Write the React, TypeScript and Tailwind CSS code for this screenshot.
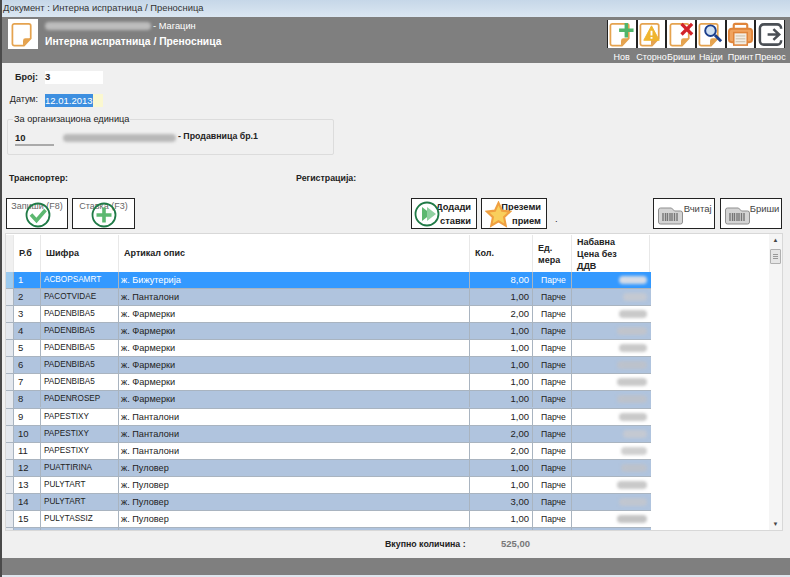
import type { ReactNode } from "react";

type Row = { code: string; name: string; qty: string; blob: string };

const rows: Row[] = [
  { code: "ACBOPSAMRT", name: "ж. Бижутерија", qty: "8,00", blob: "w-[28px] bg-[#d5dbe6]" },
  { code: "PACOTVIDAE", name: "ж. Панталони", qty: "1,00", blob: "w-[24px] bg-[#c4c9d2]" },
  { code: "PADENBIBA5", name: "ж. Фармерки", qty: "2,00", blob: "w-[28px] bg-[#c9c9c9]" },
  { code: "PADENBIBA5", name: "ж. Фармерки", qty: "1,00", blob: "w-[30px] bg-[#c0c4cc]" },
  { code: "PADENBIBA5", name: "ж. Фармерки", qty: "1,00", blob: "w-[28px] bg-[#c9c9c9]" },
  { code: "PADENBIBA5", name: "ж. Фармерки", qty: "1,00", blob: "w-[30px] bg-[#bcc2cc]" },
  { code: "PADENBIBA5", name: "ж. Фармерки", qty: "1,00", blob: "w-[30px] bg-[#c9c9c9]" },
  { code: "PADENROSEP", name: "ж. Фармерки", qty: "1,00", blob: "w-[30px] bg-[#bcc2cc]" },
  { code: "PAPESTIXY", name: "ж. Панталони", qty: "1,00", blob: "w-[28px] bg-[#c9c9c9]" },
  { code: "PAPESTIXY", name: "ж. Панталони", qty: "2,00", blob: "w-[24px] bg-[#c4c9d2]" },
  { code: "PAPESTIXY", name: "ж. Панталони", qty: "2,00", blob: "w-[26px] bg-[#d0d0d0]" },
  { code: "PUATTIRINA", name: "ж. Пуловер", qty: "1,00", blob: "w-[26px] bg-[#bcc2cc]" },
  { code: "PULYTART", name: "ж. Пуловер", qty: "1,00", blob: "w-[30px] bg-[#c9c9c9]" },
  { code: "PULYTART", name: "ж. Пуловер", qty: "3,00", blob: "w-[28px] bg-[#c0c6d0]" },
  { code: "PULYTASSIZ", name: "ж. Пуловер", qty: "1,00", blob: "w-[30px] bg-[#c4c4c4]" },
  { code: "", name: "", qty: "", blob: "w-0" },
];

function Page({ children }: { children?: ReactNode }) {
  return (
    <svg viewBox="0 0 28 28" className="h-[27px] w-[27px]" fill="none">
      <path d="M4.500 3h15a2 2 0 0 1 2 2v13l-7 7.500H4.500a2 2 0 0 1-2-2V5a2 2 0 0 1 2-2z" fill="#fff" stroke="#e5a34f" strokeWidth="1.800" />
      <path d="M13.500 25.500v-5a2.500 2.500 0 0 1 2.500-2.500h5.500z" fill="#e5a34f" />
      {children}
    </svg>
  );
}

function ToolButton({ label, children }: { label: string; children: ReactNode }) {
  return (
    <div className="flex w-[29.7px] flex-col items-center">
      <div className="flex h-[28px] w-[29.7px] items-center justify-center border-x border-[#222] bg-white">{children}</div>
      <span className="mt-[3px] whitespace-nowrap text-[9px] leading-[12px] text-white">{label}</span>
    </div>
  );
}

function GreenDisc({ plus }: { plus?: boolean }) {
  return (
    <svg viewBox="0 0 26 26" className="h-[26px] w-[26px]" fill="none">
      <circle cx="13" cy="13" r="11.500" stroke="#1f7a46" strokeWidth="1.800" />
      {plus ? (
        <path d="M13 5.500v15M5.500 13h15" stroke="#5cb870" strokeWidth="3.600" />
      ) : (
        <path d="M6 12.500l5.500 6L20.500 8" stroke="#5cb870" strokeWidth="3.600" />
      )}
    </svg>
  );
}

function Barcode() {
  return (
    <svg viewBox="0 0 26 20" className="h-[20px] w-[26px] shrink-0">
      <path d="M1.500 4a2 2 0 0 1 2-2h11l3 3h6a2 2 0 0 1 2 2v9a2 2 0 0 1-2 2h-20a2 2 0 0 1-2-2z" fill="#d4d4d4" stroke="#8f8f8f" />
      <path d="M6 7v8M8.500 7v8M10.500 7v8M13 7v8M15 7v8M17.500 7v8M20 7v8" stroke="#777" strokeWidth="1.400" />
    </svg>
  );
}

function Blob({ className }: { className: string }) {
  return <span className={`inline-block h-[8px] rounded-full blur-[1.5px] ${className}`} />;
}

function HeadCell({ className, children }: { className: string; children: ReactNode }) {
  return <div className={`flex items-center border-r border-[#e8e8e8] text-[9px] font-bold text-[#222] ${className}`}>{children}</div>;
}

export default function App() {
  return (
    <div className="flex h-[577px] w-[790px] flex-col overflow-hidden border-l-2 border-[#4a4a4a] bg-[#f0f0f0] font-['Liberation_Sans',sans-serif] text-[9.5px] text-[#222]">
      <div className="flex h-[17px] shrink-0 items-center bg-gradient-to-b from-[#c6d7e8] to-[#dbe7f2] pl-[1px] text-[9.4px] text-[#333]">
        Документ : Интерна испратница / Преносница
      </div>

      <div className="flex h-[46px] shrink-0 justify-between bg-[#7f7f7f] pl-[6px] pr-[5px] pt-[2px]">
        <div className="flex gap-[7px]">
          <div className="flex h-[30px] w-[30px] items-center justify-center bg-white">
            <Page />
          </div>
          <div className="text-white">
            <div className="flex items-center gap-[2px] leading-[14px]">
              <Blob className="w-[106px] bg-[#bdbdbd]" />
              <span className="text-[9.3px]">- Магацин</span>
            </div>
            <div className="mt-[1px] text-[10.3px] font-bold leading-[15px]">Интерна испратница / Преносница</div>
          </div>
        </div>
        <div className="flex gap-0 pt-[1px]">
          <ToolButton label="Нов">
            <Page>
              <path d="M19 2v15M11.500 9.500h15" stroke="#4fb56a" strokeWidth="3.600" />
            </Page>
          </ToolButton>
          <ToolButton label="Сторно">
            <Page>
              <path d="M14 5l8 15H6z" fill="#efb52f" stroke="#efb52f" strokeLinejoin="round" />
              <path d="M14 10v5M14 16.500v2" stroke="#fff" strokeWidth="2" />
            </Page>
          </ToolButton>
          <ToolButton label="Бриши">
            <Page>
              <path d="M14 3l11 11M25 3L14 14" stroke="#d2232a" strokeWidth="3.400" />
            </Page>
          </ToolButton>
          <ToolButton label="Најди">
            <Page>
              <circle cx="14" cy="10" r="5.500" fill="#cfe0f2" stroke="#1c3f8c" strokeWidth="2" />
              <path d="M18.500 14.500L25 21" stroke="#1c3f8c" strokeWidth="3" />
            </Page>
          </ToolButton>
          <ToolButton label="Принт">
            <svg viewBox="0 0 28 28" className="h-[27px] w-[27px]" fill="none">
              <path d="M7 9V4.500A1.500 1.500 0 0 1 8.500 3h11A1.500 1.500 0 0 1 21 4.500V9" stroke="#e0853a" strokeWidth="2.200" />
              <rect x="2" y="8" width="24" height="14" rx="3" fill="#f0a35e" stroke="#e0853a" strokeWidth="2" />
              <rect x="7" y="12" width="14" height="13" fill="#f3ede4" stroke="#e0853a" strokeWidth="1.600" />
              <path d="M9 15.500h10M9 18.500h10M9 21.500h10" stroke="#c9b9a4" />
            </svg>
          </ToolButton>
          <ToolButton label="Пренос">
            <svg viewBox="0 0 28 28" className="h-[27px] w-[27px]" fill="none">
              <path d="M11 14h11M17 8.500l6 5.500-6 5.500" stroke="#4a4f55" strokeWidth="2.600" />
              <path d="M25 8V7.500a4 4 0 0 0-4-4H7a4 4 0 0 0-4 4v13a4 4 0 0 0 4 4h14a4 4 0 0 0 4-4V20" stroke="#4a4f55" strokeWidth="2.600" />
            </svg>
          </ToolButton>
        </div>
      </div>

      <div className="mt-[8px] flex h-[13px] shrink-0 items-center">
        <span className="w-[36px] text-right text-[9px] font-bold">Број:</span>
        <div className="ml-[7px] flex h-[13px] w-[58px] items-center bg-white font-bold">3</div>
      </div>

      <div className="mt-[9px] flex h-[14px] shrink-0 items-center">
        <span className="w-[36px] text-right text-[9px]">Датум:</span>
        <div className="ml-[7px] flex h-[13px] w-[58px] bg-[#fbf8d0]">
          <span className="bg-[#3d8fe0] leading-[13px] text-white">12.01.2013</span>
        </div>
      </div>

      <div className="relative ml-[5px] mt-[12px] flex h-[36px] w-[327px] shrink-0 items-center rounded-[2px] border border-[#dcdcdc] pl-[7px]">
        <span className="absolute -top-[7px] left-[5px] bg-[#f0f0f0] px-[1px] text-[9.2px] leading-[12px]">За организациона единица</span>
        <div className="mt-[3px] w-[39px] border-b-2 border-[#aaa] font-bold leading-[13px]">10</div>
        <Blob className="ml-[9px] mt-[1px] w-[113px] bg-[#b8b8b8]" />
        <span className="ml-[2px] text-[8.8px] font-bold">- Продавница бр.1</span>
      </div>

      <div className="mt-[17px] flex h-[14px] shrink-0 items-center text-[8.8px] font-bold">
        <span className="ml-[7px] w-[287px]">Транспортер:</span>
        <span>Регистрација:</span>
      </div>

      <div className="mt-[12px] flex h-[31px] shrink-0 pl-[4px]">
        <button className="relative h-[31px] w-[62px] border border-[#222] bg-white pb-[13px] text-[9px] text-[#666]">
          Запиши (F8)
          <span className="absolute left-[18px] top-[3px]">
            <GreenDisc />
          </span>
        </button>
        <button className="relative ml-[4px] h-[31px] w-[63px] border border-[#222] bg-white pb-[13px] text-[9px] text-[#666]">
          Ставка (F3)
          <span className="absolute left-[18px] top-[3px]">
            <GreenDisc plus />
          </span>
        </button>
        <button className="relative ml-[276px] h-[31px] w-[66px] border border-[#222] bg-white pr-[5px] text-right text-[9.3px] font-bold leading-[14px] text-[#222]">
          Додади<br />ставки
          <svg viewBox="0 0 26 26" className="absolute left-[2px] top-[2px] h-[26px] w-[26px]" fill="none">
            <circle cx="13" cy="13" r="11.500" fill="#fff" stroke="#1f7a46" strokeWidth="1.800" />
            <path d="M8 6l9 7-9 7z" fill="#5cb870" />
            <path d="M13 6l9 7-9 7z" fill="#8fd0a0" />
          </svg>
        </button>
        <button className="relative ml-[4px] h-[31px] w-[66px] border border-[#222] bg-white pr-[5px] text-right text-[9.3px] font-bold leading-[14px] text-[#222]">
          Преземи<br />прием
          <svg viewBox="0 0 28 28" className="absolute left-[3px] top-[2px] h-[27px] w-[27px]">
            <path d="M14 2l3.700 8 8.300 1-6.200 5.700 1.700 8.800L14 21l-7.500 4.500 1.700-8.800L2 11l8.300-1z" fill="#f9cf5c" stroke="#f0a040" strokeWidth="2.200" />
          </svg>
        </button>
        <span className="ml-[8px] mt-[17px] leading-[8px]">.</span>
        <button className="ml-[95px] flex h-[31px] w-[62px] items-start gap-[1px] border border-[#222] bg-white pl-[3px] pt-[4px] text-[9.5px] leading-[11px] text-[#444]">
          <span className="mt-[3px]"><Barcode /></span>
          <span>Вчитај</span>
        </button>
        <button className="ml-[5px] flex h-[31px] w-[62px] items-start gap-[0px] border border-[#222] bg-white pl-[3px] pt-[4px] text-[9.5px] leading-[11px] text-[#444]">
          <span className="mt-[3px]"><Barcode /></span>
          <span>Бриши</span>
        </button>
      </div>

      <div className="ml-[3px] mt-[4px] flex h-[298px] w-[778px] shrink-0 border border-[#d8d8d8] bg-white">
        <div className="w-[763px] overflow-hidden">
          <div className="flex h-[38px] w-[645px] pt-[1px]">
            <div className="w-[8px] border-r border-[#e8e8e8] bg-[#f0f0f0]" />
            <HeadCell className="w-[27px] pl-[5px]">Р.б</HeadCell>
            <HeadCell className="w-[78px] pl-[5px]">Шифра</HeadCell>
            <HeadCell className="w-[351px] pl-[5px]">Артикал опис</HeadCell>
            <HeadCell className="w-[63px] pl-[5px]">Кол.</HeadCell>
            <HeadCell className="w-[39px] pl-[5px] leading-[12px]">Ед.<br />мера</HeadCell>
            <HeadCell className="w-[78px] pl-[5px] leading-[12px]">Набавна<br />Цена без<br />ДДВ</HeadCell>
          </div>
          {rows.map((row, i) => {
            const selected = i === 0;
            const tint = selected ? "bg-[#3399ff] text-white" : i % 2 === 1 ? "bg-[#b0c4de]" : "bg-white";
            const filler = row.code === "";
            return (
              <div key={i} className="flex h-[17.07px] w-[645px] border-b border-[#a9b4c0]">
                <div className={`w-[8px] border-r border-[#a9b4c0] ${selected ? "bg-[#9ccbf0]" : "bg-[#e4e8ee]"}`} />
                <div className={`flex w-[637px] items-center ${tint}`}>
                  <span className="h-[16px] w-[27px] border-r border-[#a9b4c0] pl-[4px] leading-[16px]">{filler ? "" : i + 1}</span>
                  <span className="h-[16px] w-[78px] border-r border-[#a9b4c0] pl-[3px] text-[8.2px] leading-[16px]">{row.code}</span>
                  <span className="h-[16px] w-[351px] border-r border-[#a9b4c0] pl-[2px] text-[9.2px] leading-[16px]">{row.name}</span>
                  <span className="h-[16px] w-[63px] border-r border-[#a9b4c0] pr-[3px] text-right leading-[16px]">{row.qty}</span>
                  <span className="h-[16px] w-[39px] border-r border-[#a9b4c0] pl-[8px] text-[8.6px] leading-[16px]">{filler ? "" : "Парче"}</span>
                  <span className="flex h-[16px] w-[78px] items-center justify-end pr-[3px]">
                    <Blob className={row.blob} />
                  </span>
                </div>
              </div>
            );
          })}
        </div>
        <div className="flex w-[13px] flex-col items-center bg-[#f5f5f5]">
          <span className="mt-[2px] text-[6px] leading-[8px] text-[#444]">▲</span>
          <div className="mt-[5px] flex h-[15px] w-[11px] flex-col items-center justify-center gap-[1px] rounded-[1px] border border-[#b0b0b0] bg-[#e6e6e6]">
            <span className="h-px w-[5px] bg-[#999]" />
            <span className="h-px w-[5px] bg-[#999]" />
            <span className="h-px w-[5px] bg-[#999]" />
          </div>
          <span className="mb-[2px] mt-auto text-[6px] leading-[8px] text-[#444]">▼</span>
        </div>
      </div>

      <div className="flex h-[27px] shrink-0 items-center">
        <span className="ml-[383px] w-[89px] whitespace-nowrap text-[8.8px] font-bold">Вкупно количина :</span>
        <span className="w-[56px] text-right font-bold text-[#777]">525,00</span>
      </div>

      <div className="h-[17px] shrink-0 bg-[#7f7f7f]" />
      <div className="min-h-0 flex-1 bg-[#dfe6ee]" />
    </div>
  );
}
